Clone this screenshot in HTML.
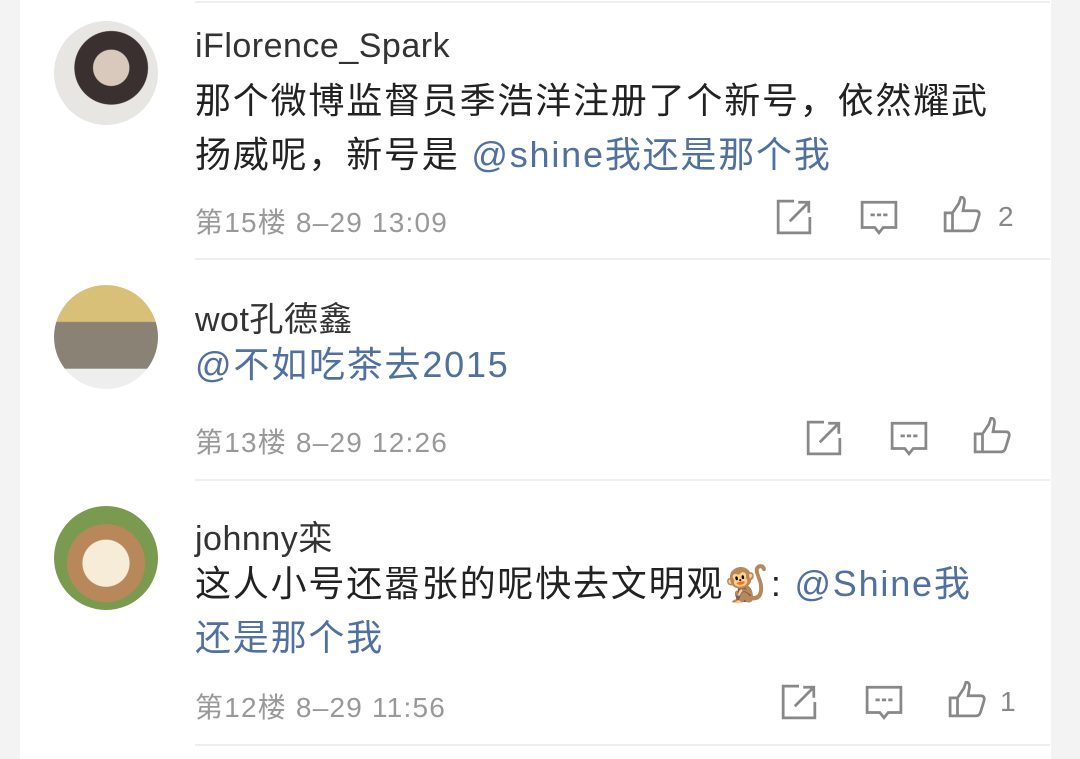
<!DOCTYPE html>
<html><head><meta charset="utf-8"><style>
body{margin:0;width:1080px;height:759px;background:#f3f3f3;position:relative;overflow:hidden;font-family:"Liberation Sans","Noto Sans CJK SC",sans-serif}
.card{position:absolute;left:20px;top:0;width:1031px;height:759px;background:#fff}
.a{position:absolute;left:54px;width:104px;height:104px;border-radius:50%;overflow:hidden}
.t{position:absolute;left:195px;white-space:nowrap}
.n{font-size:34px;color:#333;letter-spacing:0.5px}
.b{font-size:36px;color:#222;line-height:54px;letter-spacing:1.8px}
.m{font-size:28px;color:#999;letter-spacing:1.2px}
.l{color:#50709f}
.d{position:absolute;left:195px;right:30px;height:2px;background:#eee}
svg.i{position:absolute;width:38px;height:38px}
.c{position:absolute;font-size:28px;color:#888}
</style></head><body>
<div class="card"></div>
<div class="d" style="top:1px"></div>
<div class="a" style="top:21px;background:radial-gradient(circle at 55% 45%,#d9c8bc 0 22%,#3a3030 23% 45%,#e8e6e3 46%)"></div>
<div class="t n" style="top:27px">iFlorence_Spark</div>
<div class="t b" style="top:74px">那个微博监督员季浩洋注册了个新号，依然耀武<br>扬威呢，新号是 <span class="l">@shine我还是那个我</span></div>
<div class="t m" style="top:201px">第15楼 8–29 13:09</div>
<div class="d" style="top:258px"></div>

<div class="a" style="top:285px;background:linear-gradient(#d8c078 0 35%,#8a8274 36% 80%,#eee 81%)"></div>
<div class="t n" style="top:292px">wot孔德鑫</div>
<div class="t b l" style="top:338px">@不如吃茶去2015</div>
<div class="t m" style="top:421px">第13楼 8–29 12:26</div>
<div class="d" style="top:479px"></div>

<div class="a" style="top:506px;background:radial-gradient(circle at 50% 55%,#f6ecd8 0 30%,#b8885a 31% 50%,#7a9a50 51%)"></div>
<div class="t n" style="top:511px">johnny栾</div>
<div class="t b" style="top:557px">这人小号还嚣张的呢快去文明观🐒: <span class="l">@Shine我</span><br><span class="l">还是那个我</span></div>
<div class="t m" style="top:686px">第12楼 8–29 11:56</div>
<div class="d" style="top:744px"></div>

<svg width="0" height="0" style="position:absolute"><defs>
<g id="s" fill="none" stroke="#888" stroke-width="2.6"><path d="M18 3H3v30h30V18"/><path d="M14 22L32 4M22 4h10v10"/></g>
<g id="k" fill="none" stroke="#888" stroke-width="2.6"><path d="M2 4h32v24H22l-4 5-4-5H2z"/><path d="M10 16h4M16 16h4M22 16h4"/></g>
<g id="g" fill="none" stroke="#888" stroke-width="2.6"><path d="M2 16h7v17H2zM9 16l6-9 2-6c3 0 4 3 3 7l-1 6h12c3 0 4 2 3 5l-3 10c-1 3-2 4-5 4H9"/></g>
</defs></svg>
<svg class="i" style="left:775px;top:198px" viewBox="0 0 36 36"><use href="#s"/></svg>
<svg class="i" style="left:860px;top:198px" viewBox="0 0 36 36"><use href="#k"/></svg>
<svg class="i" style="left:943px;top:196px" viewBox="0 0 36 36"><use href="#g"/></svg>
<div class="c" style="left:998px;top:201px">2</div>

<svg class="i" style="left:805px;top:419px" viewBox="0 0 36 36"><use href="#s"/></svg>
<svg class="i" style="left:890px;top:419px" viewBox="0 0 36 36"><use href="#k"/></svg>
<svg class="i" style="left:973px;top:417px" viewBox="0 0 36 36"><use href="#g"/></svg>

<svg class="i" style="left:780px;top:683px" viewBox="0 0 36 36"><use href="#s"/></svg>
<svg class="i" style="left:865px;top:683px" viewBox="0 0 36 36"><use href="#k"/></svg>
<svg class="i" style="left:948px;top:681px" viewBox="0 0 36 36"><use href="#g"/></svg>
<div class="c" style="left:1000px;top:686px">1</div>
</body></html>
